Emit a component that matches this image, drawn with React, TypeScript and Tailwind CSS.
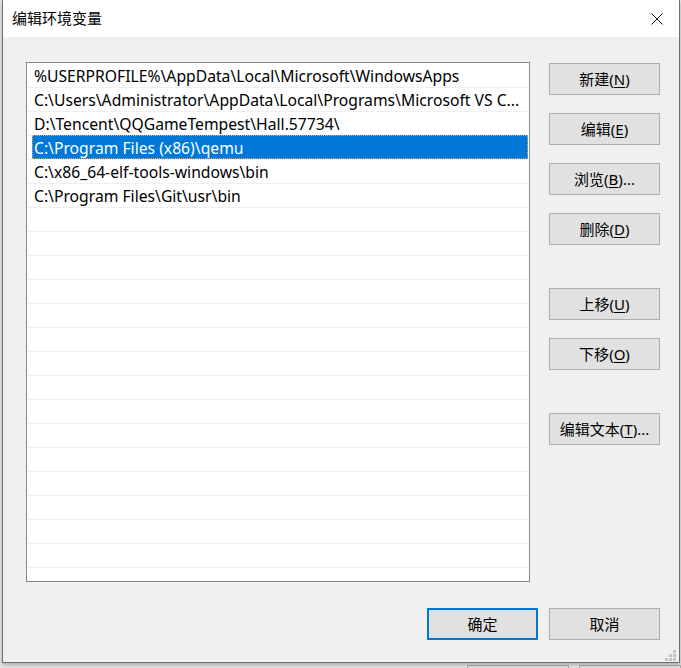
import React from "react"

const paths = [
    "%USERPROFILE%\\AppData\\Local\\Microsoft\\WindowsApps",
    "C:\\Users\\Administrator\\AppData\\Local\\Programs\\Microsoft VS C...",
    "D:\\Tencent\\QQGameTempest\\Hall.57734\\",
    "C:\\Program Files (x86)\\qemu",
    "C:\\x86_64-elf-tools-windows\\bin",
    "C:\\Program Files\\Git\\usr\\bin",
]

const SELECTED = 3
const FONT = "font-['Noto_Sans','Noto_Sans_CJK_SC',sans-serif]"

const Btn: React.FC<{ label: string; k?: string; tail?: string; primary?: boolean }> = ({ label, k, tail, primary }) => (
    <div
        className={
            "w-[111px] h-[32px] flex items-center justify-center bg-[#e1e1e1] text-[15px] text-black " +
            (primary ? "border-2 border-[#0078d7]" : "border border-[#adadad]")
        }
    >
        <span>
            {label}
            {k && (
                <>
                    (<span className="underline underline-offset-2">{k}</span>){tail}
                </>
            )}
        </span>
    </div>
)

const App: React.FC = () => {
    const rows = Array.from({ length: 22 }, (_, i) => paths[i] ?? "")

    return (
        <div className={`w-[681px] h-[668px] bg-[#e6e6e6] overflow-hidden ${FONT}`}>
            <div className="relative ml-[2px] w-[678px] h-[663px] flex flex-col border-l border-r border-b border-[#6f6f6f] bg-[#f0f0f0] shadow-[0_2px_4px_rgba(0,0,0,0.25)]">
                {/* title bar */}
                <div className="h-[37px] shrink-0 bg-white flex items-center justify-between pl-[9px] pr-[16px]">
                    <span className="text-[15px] text-black leading-none">编辑环境变量</span>
                    <svg width="12" height="12" viewBox="0 0 12 12">
                        <path d="M0.5 0.5 L11.5 11.5 M11.5 0.5 L0.5 11.5" stroke="#111" strokeWidth="1" />
                    </svg>
                </div>

                <div className="flex flex-col pl-[23px] pr-[19px] pt-[25px]">
                    <div className="flex gap-[19px]">
                        {/* list */}
                        <div className="w-[504px] h-[520px] border border-[#828790] bg-white pt-[1px] pl-[1px] pr-[1px] overflow-hidden">
                            {rows.map((p, i) => (
                                <div key={i} className="h-[24px] border-b border-[#efefef] flex">
                                    {i === SELECTED ? (
                                        <div className="ml-[4px] flex-1 h-[24px] -mt-[1px] bg-[#0078d7] text-white outline-1 outline-dotted outline-[#e9a86a] -outline-offset-1 flex items-center pl-[2px] pt-[3px] text-[15.7px]">
                                            {p}
                                        </div>
                                    ) : (
                                        <div className="pl-[6px] pt-[2px] flex items-center text-[15.7px] text-black whitespace-nowrap">{p}</div>
                                    )}
                                </div>
                            ))}
                        </div>

                        {/* side buttons */}
                        <div className="flex flex-col pt-[1px]">
                            <div className="flex flex-col gap-[18px]">
                                <Btn label="新建" k="N" />
                                <Btn label="编辑" k="E" />
                                <Btn label="浏览" k="B" tail="..." />
                                <Btn label="删除" k="D" />
                            </div>
                            <div className="flex flex-col gap-[18px] mt-[43px]">
                                <Btn label="上移" k="U" />
                                <Btn label="下移" k="O" />
                            </div>
                            <div className="mt-[43px]">
                                <Btn label="编辑文本" k="T" tail="..." />
                            </div>
                        </div>
                    </div>

                    <div className="flex justify-end gap-[11px] mt-[26px]">
                        <Btn label="确定" primary />
                        <Btn label="取消" />
                    </div>
                </div>

                {/* resize grip */}
                <div className="absolute right-[3px] bottom-[1px] grid grid-cols-3 gap-[1px]">
                    <span className="w-[3px] h-[3px]" />
                    <span className="w-[3px] h-[3px]" />
                    <span className="w-[3px] h-[3px] bg-[#c4c4c4]" />
                    <span className="w-[3px] h-[3px]" />
                    <span className="w-[3px] h-[3px] bg-[#c4c4c4]" />
                    <span className="w-[3px] h-[3px] bg-[#c4c4c4]" />
                    <span className="w-[3px] h-[3px] bg-[#c4c4c4]" />
                    <span className="w-[3px] h-[3px] bg-[#c4c4c4]" />
                    <span className="w-[3px] h-[3px] bg-[#c4c4c4]" />
                </div>
            </div>

            {/* window behind */}
            <div className="flex gap-[10px] ml-[467px] mt-[2px]">
                <div className="w-[110px] h-[8px] border border-[#adadad] bg-[#e1e1e1]" />
                <div className="w-[110px] h-[8px] border border-[#adadad] bg-[#e1e1e1]" />
            </div>
        </div>
    )
}

export default App
